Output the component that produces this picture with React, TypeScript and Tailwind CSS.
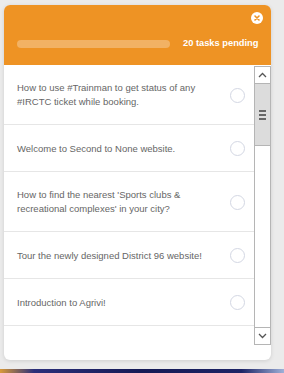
import React from "react";

const tasks = [
  "How to use #Trainman to get status of any #IRCTC ticket while booking.",
  "Welcome to Second to None website.",
  "How to find the nearest 'Sports clubs & recreational complexes' in your city?",
  "Tour the newly designed District 96 website!",
  "Introduction to Agrivi!",
  "How to book a ride with Ola in a few simple steps using the app",
];

function CloseIcon() {
  return (
    <svg width="12" height="12" viewBox="0 0 12 12">
      <circle cx="6" cy="6" r="6" fill="#fff" />
      <path d="M4 4 L8 8 M8 4 L4 8" stroke="#ee9324" strokeWidth="1.6" strokeLinecap="round" />
    </svg>
  );
}

function Scrollbar() {
  return (
    <div className="w-[17px] shrink-0 mt-px flex flex-col border border-[#b5b5b5] bg-white">
      <div className="h-[17px] flex items-center justify-center border-b border-[#b5b5b5]">
        <svg width="9" height="6" viewBox="0 0 9 6">
          <path d="M1 5 L4.5 1.5 L8 5" stroke="#555" strokeWidth="1.3" fill="none" />
        </svg>
      </div>
      <div className="h-[62px] bg-[#dcdcdc] border-b border-[#b5b5b5] flex flex-col items-center justify-center gap-[2px]">
        <div className="w-[7px] h-[2px] bg-[#666]" />
        <div className="w-[7px] h-[2px] bg-[#666]" />
        <div className="w-[7px] h-[2px] bg-[#666]" />
      </div>
      <div className="flex-1" />
      <div className="h-[17px] flex items-center justify-center border-t border-[#b5b5b5]">
        <svg width="9" height="6" viewBox="0 0 9 6">
          <path d="M1 1 L4.5 4.5 L8 1" stroke="#555" strokeWidth="1.3" fill="none" />
        </svg>
      </div>
    </div>
  );
}

export default function App() {
  return (
    <div
      className="w-[284px] h-[373px] bg-[#ebebeb] flex flex-col overflow-hidden"
      style={{ fontFamily: '"Liberation Sans", Arial, sans-serif' }}
    >
      <div className="ml-[4px] mt-[5px] w-[267px] h-[355px] shrink-0 bg-white rounded-[6px] shadow-[0_1px_4px_rgba(0,0,0,0.12)] flex flex-col overflow-hidden">
        <div className="h-[60px] bg-[#ee9324] shrink-0 flex flex-col">
          <div className="flex justify-end pt-[7px] pr-[8px] h-[20px]">
            <CloseIcon />
          </div>
          <div className="flex items-center mt-[14px] pl-[13px]">
            <div className="w-[153px] h-[8px] rounded-full bg-[#f2b264]" />
            <span className="ml-[13px] text-[9.3px] font-bold text-white leading-none whitespace-nowrap">20 tasks pending</span>
          </div>
        </div>
        <div className="h-[280px] flex shrink-0">
          <div className="flex-1 overflow-hidden">
            {tasks.map((t, i) => (
              <div key={i} className="flex items-center border-b border-[#e6e6e6] pl-[13px] pr-[9px] pt-[16px] pb-[15px]">
                <p className="flex-1 text-[9.5px] leading-[14px] text-[#666] pr-[6px]">{t}</p>
                <div className="w-[15px] h-[15px] rounded-full border border-[#d3d7e3] shrink-0" />
              </div>
            ))}
          </div>
          <Scrollbar />
        </div>
      </div>
      <div className="mt-[9px] h-[4px] shrink-0 bg-[linear-gradient(90deg,#d99a3a_0%,#2b2f7a_12%,#151a55_50%,#1d2466_85%,#9fb0d8_100%)]" />
    </div>
  );
}
